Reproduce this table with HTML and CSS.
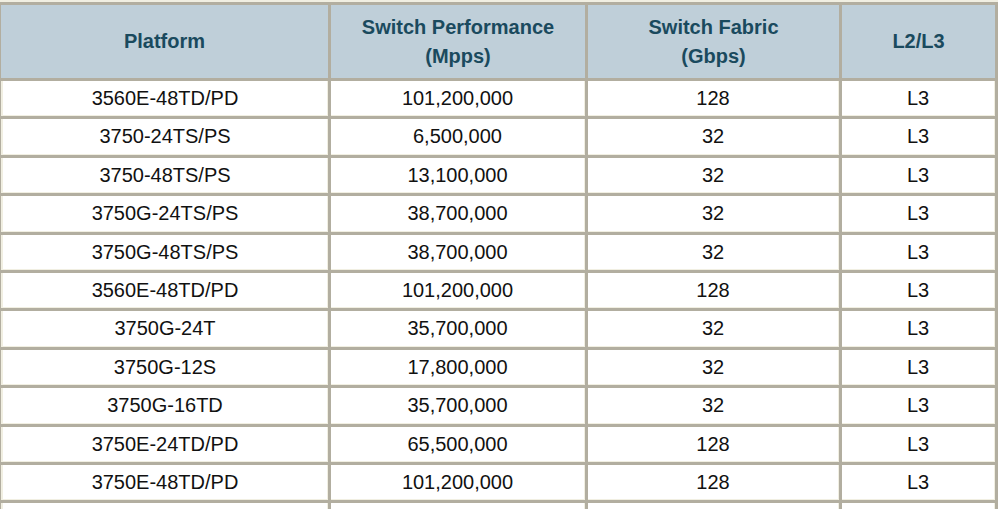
FILE: index.html
```html
<!DOCTYPE html>
<html>
<head>
<meta charset="utf-8">
<title>Switch Platforms</title>
<link rel="stylesheet" href="styles.css">
</head>
<body>
<table class="specs">
  <colgroup>
    <col class="c1"><col class="c2"><col class="c3"><col class="c4">
  </colgroup>
  <thead>
    <tr>
      <th>Platform</th>
      <th>Switch Performance<br>(Mpps)</th>
      <th>Switch Fabric<br>(Gbps)</th>
      <th>L2/L3</th>
    </tr>
  </thead>
  <tbody>
    <tr><td>3560E-48TD/PD</td><td>101,200,000</td><td>128</td><td>L3</td></tr>
    <tr><td>3750-24TS/PS</td><td>6,500,000</td><td>32</td><td>L3</td></tr>
    <tr><td>3750-48TS/PS</td><td>13,100,000</td><td>32</td><td>L3</td></tr>
    <tr><td>3750G-24TS/PS</td><td>38,700,000</td><td>32</td><td>L3</td></tr>
    <tr><td>3750G-48TS/PS</td><td>38,700,000</td><td>32</td><td>L3</td></tr>
    <tr><td>3560E-48TD/PD</td><td>101,200,000</td><td>128</td><td>L3</td></tr>
    <tr><td>3750G-24T</td><td>35,700,000</td><td>32</td><td>L3</td></tr>
    <tr><td>3750G-12S</td><td>17,800,000</td><td>32</td><td>L3</td></tr>
    <tr><td>3750G-16TD</td><td>35,700,000</td><td>32</td><td>L3</td></tr>
    <tr><td>3750E-24TD/PD</td><td>65,500,000</td><td>128</td><td>L3</td></tr>
    <tr><td>3750E-48TD/PD</td><td>101,200,000</td><td>128</td><td>L3</td></tr>
    <tr><td>&nbsp;</td><td>&nbsp;</td><td>&nbsp;</td><td>&nbsp;</td></tr>
  </tbody>
</table>
</body>
</html>
```

FILE: styles.css
```css
html, body {
  margin: 0;
  padding: 0;
  background: #ffffff;
  overflow: hidden;
}

body {
  font-family: "Liberation Sans", Arial, sans-serif;
  font-size: 20px;
  color: #111111;
}

.specs {
  border-collapse: separate;
  border-spacing: 3px;
  background: #b2aea0;
  border-top: 2px solid #f1efe2;
  margin-left: -2px;
  table-layout: fixed;
  width: 1000px;
}

.c1 { width: 327px; }
.c2 { width: 254px; }
.c3 { width: 251px; }
.c4 { width: 153px; }

.specs th {
  height: 73px;
  padding: 0;
  box-sizing: border-box;
  background: #bfcfd9;
  color: #1a4a5e;
  font-weight: bold;
  font-size: 20px;
  line-height: 29px;
  text-align: center;
  vertical-align: middle;
}

.specs td {
  padding: 0;
  box-sizing: border-box;
  background: #ffffff;
  border-right: 1px solid #f1efe2;
  border-bottom: 1px solid #f1efe2;
  line-height: 34.4px;
  text-align: center;
  vertical-align: middle;
  white-space: nowrap;
}

.specs td:first-child {
  border-left: 2px solid #f1efe2;
}
```
